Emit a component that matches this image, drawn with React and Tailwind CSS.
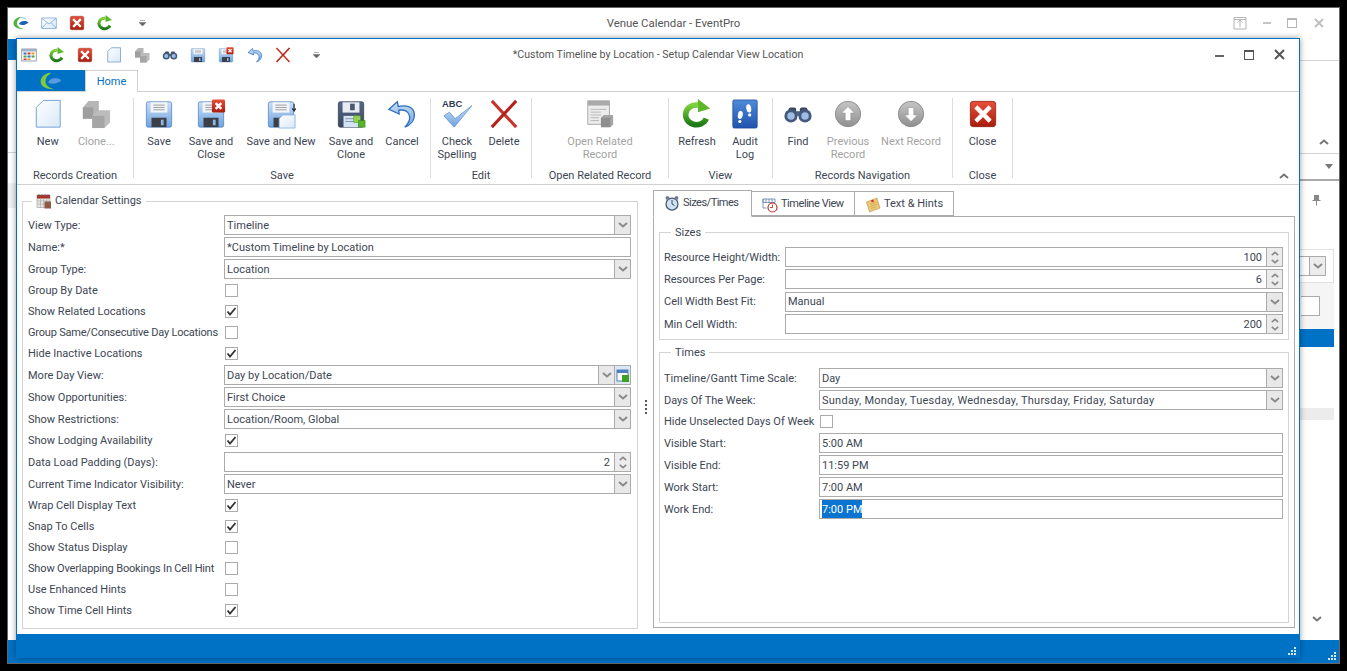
const Defs = () => (
  <svg className="absolute h-0 w-0" aria-hidden="true">
    <defs>
      <linearGradient id="redG" x1="0" y1="0" x2="0" y2="1"><stop offset="0" stopColor="#e8503a" /><stop offset="1" stopColor="#a81c0c" /></linearGradient>
      <linearGradient id="greenG" x1="0" y1="0" x2="0" y2="1"><stop offset="0" stopColor="#7fd13b" /><stop offset="1" stopColor="#1d7a16" /></linearGradient>
      <linearGradient id="blueG" x1="0" y1="0" x2="0" y2="1"><stop offset="0" stopColor="#c9def5" /><stop offset="1" stopColor="#6ea3e0" /></linearGradient>
      <linearGradient id="bookG" x1="0" y1="0" x2="0" y2="1"><stop offset="0" stopColor="#4f8ad8" /><stop offset="1" stopColor="#1f54ac" /></linearGradient>
      <linearGradient id="paperG" x1="0" y1="0" x2="1" y2="1"><stop offset="0" stopColor="#ffffff" /><stop offset="1" stopColor="#d9e8f7" /></linearGradient>
      <linearGradient id="grayG" x1="0" y1="0" x2="0" y2="1"><stop offset="0" stopColor="#c6c6c6" /><stop offset="1" stopColor="#8f8f8f" /></linearGradient>
      <linearGradient id="darkG" x1="0" y1="0" x2="0" y2="1"><stop offset="0" stopColor="#56688a" /><stop offset="1" stopColor="#3a4660" /></linearGradient>
    </defs>
  </svg>
);

const Svg = ({ size = 30, children, vb = "0 0 32 32" }) => (
  <svg width={size} height={size} viewBox={vb} className="shrink-0">{children}</svg>
);

const RedX = ({ size }) => (
  <Svg size={size}>
    <rect x="2.5" y="2.5" width="27" height="27" rx="3" fill="url(#redG)" stroke="#8a1a0e" strokeWidth="0.8" />
    <path d="M10 10 L22 22 M22 10 L10 22" stroke="#fff" strokeWidth="4.6" strokeLinecap="square" />
  </Svg>
);

const NewDoc = ({ size }) => (
  <Svg size={size}>
    <path d="M11 1.5 H29 V30 H3.5 V9 Z" fill="url(#paperG)" stroke="#6f9fd3" strokeWidth={size ? 1.6 : 1} />
  </Svg>
);

const Cubes = ({ size }) => (
  <Svg size={size}>
    <path d="M2 9 L8 2 H19 V14 L13 21 H2 Z" fill="#b5b5b5" />
    <path d="M2 9 H13 V21 H2 Z" fill="#9e9e9e" />
    <path d="M12 18 L18 12 H31 V25 L25 31 H12 Z" fill="#bcbcbc" />
    <path d="M12 18 H25 V31 H12 Z" fill="#a5a5a5" />
  </Svg>
);

const Binoculars = ({ size }) => (
  <Svg size={size}>
    <rect x="6" y="9" width="8" height="6" rx="2" fill="#39475f" />
    <rect x="18" y="9" width="8" height="6" rx="2" fill="#39475f" />
    <rect x="13" y="13" width="6" height="5" fill="#54627c" />
    <circle cx="8.5" cy="18" r="7" fill="#44597c" />
    <circle cx="23.5" cy="18" r="7" fill="#44597c" />
    <circle cx="8.5" cy="18" r="4" fill="#9dbde4" />
    <circle cx="23.5" cy="18" r="4" fill="#9dbde4" />
  </Svg>
);

const Floppy = ({ dark }) => (
  <>
    <rect x="2.5" y="3" width="27" height="27" rx="2" fill={dark ? "url(#darkG)" : "url(#blueG)"} stroke={dark ? "#333d52" : "#4f82bf"} strokeWidth="0.8" />
    <rect x="7" y="3.5" width="18" height="11" fill={dark ? "#e9edf3" : "#f2f4f7"} />
    {dark ? (
      <>
        <rect x="15" y="5" width="5" height="7" fill="#4a5873" />
        <rect x="8" y="18" width="16" height="12" fill="#d3e3f3" />
        <path d="M10 21 H20 M10 24 H20" stroke="#7f93ad" />
      </>
    ) : (
      <>
        <path d="M10 6.5 H22 M10 9 H22 M10 11.5 H22" stroke="#9a9a9a" />
        <rect x="8" y="20" width="16" height="10" fill="#3c3f45" />
        <rect x="18" y="22" width="3" height="6" fill="#8db6e4" />
      </>
    )}
  </>
);

const Save = ({ size }) => <Svg size={size}><Floppy /></Svg>;

const SaveClose = ({ size }) => (
  <Svg size={size}>
    <Floppy />
    <rect x="17" y="0.5" width="14" height="14" rx="1.5" fill="url(#redG)" />
    <path d="M21 4.5 L27 10.5 M27 4.5 L21 10.5" stroke="#fff" strokeWidth="2.6" />
  </Svg>
);

const SaveNew = ({ size }) => (
  <Svg size={size}>
    <Floppy />
    <path d="M18 17 H31 V31 H14 V21 Z" fill="url(#paperG)" stroke="#7fa9d6" strokeWidth="0.8" />
    <path d="M30 5 V13 M28 10 L30 13 L32 10" stroke="#222" strokeWidth="1.1" fill="none" />
  </Svg>
);

const SaveClone = ({ size }) => (
  <Svg size={size}>
    <Floppy dark />
    <rect x="19" y="18" width="7" height="7" fill="#8fd44a" stroke="#4f9a22" strokeWidth="0.6" />
    <rect x="24" y="23" width="7" height="7" fill="#56b52c" stroke="#3a8a1c" strokeWidth="0.6" />
  </Svg>
);

const Undo = ({ size }) => (
  <Svg size={size}>
    <path d="M11 3 L2 11 L13 16 L12.5 12 C18 11 23 13 24 18 C25 23 22 27 19 30 C25 28 30 23 29 15 C28 8 20 6 12 8 Z" fill="url(#blueG)" stroke="#2f6fbb" strokeWidth="1.4" />
  </Svg>
);

const Cross = ({ size }) => (
  <Svg size={size}>
    <path d="M3 2 L29 30" stroke="#c8342b" strokeWidth="3.2" />
    <path d="M29 2 L3 30" stroke="#b3231c" strokeWidth="3.2" />
  </Svg>
);

const Spell = ({ size }) => (
  <Svg size={size}>
    <text x="0" y="9" fontSize="10" fontWeight="700" fontFamily="Liberation Sans, sans-serif" fill="#2f3b52">ABC</text>
    <path d="M2 18 L13 30 L32 7 L14 21 L8 14 Z" fill="url(#blueG)" stroke="#5f8fc7" strokeWidth="0.8" />
  </Svg>
);

const Related = ({ size }) => (
  <Svg size={size}>
    <rect x="3" y="2" width="23" height="25" fill="#ececec" stroke="#a6a6a6" />
    <rect x="3" y="2" width="23" height="5" fill="#a9a9a9" />
    <path d="M6 11 H23 M6 14 H17 M6 17 H17 M6 20 H15 M6 23 H15" stroke="#b5b5b5" />
    <path d="M17 20 L20 17 H30 V27 L27 30 H17 Z" fill="#a5a5a5" />
    <path d="M17 20 H27 V30 H17 Z" fill="#8e8e8e" />
  </Svg>
);

const Refresh = ({ size }) => (
  <Svg size={size}>
    <path d="M26 21 A11.5 10.5 0 1 1 17 6.5" fill="none" stroke="url(#greenG)" strokeWidth="6" />
    <path d="M17 0 L17 14 L30 10 Z" fill="#5cb82a" />
  </Svg>
);

const Audit = ({ size }) => (
  <Svg size={size}>
    <rect x="3" y="1" width="26" height="30" rx="1.5" fill="url(#bookG)" stroke="#1c4a96" strokeWidth="0.8" />
    <ellipse cx="11" cy="17" rx="2.6" ry="4.4" fill="#fff" transform="rotate(10 11 17)" />
    <circle cx="10.5" cy="24" r="1.7" fill="#fff" />
    <ellipse cx="20" cy="10" rx="2.6" ry="4.4" fill="#fff" transform="rotate(-10 20 10)" />
    <circle cx="21" cy="17" r="1.7" fill="#fff" />
  </Svg>
);

const ArrowCircle = ({ size, down }) => (
  <Svg size={size}>
    <circle cx="16" cy="16" r="13.5" fill="url(#grayG)" stroke="#8a8a8a" />
    <g transform={down ? "rotate(180 16 16)" : undefined}>
      <path d="M16 8 L23 15 H19 V23 H13 V15 H9 Z" fill="#fff" stroke="#8c8c8c" strokeWidth="0.6" />
    </g>
  </Svg>
);

const Logo = ({ size = 16, band }) => (
  <Svg size={size}>
    <path d="M14 4 C5 6 1 11 1 17 C1 24 9 28 21 28 C13 26 8 22 8 17 C8 12 10 8 16 5 Z" fill={band ? "#7ecb3a" : "#4fb33c"} />
    {!band && <path d="M14 5 C20 3 26 6 28 10 C24 7 19 6 14 5 Z" fill="#7fb6e6" />}
    <path d="M12 18 C14 12 24 10 31 15 C26 20 18 22 12 18 Z" fill={band ? "#5a9ae0" : "#1c5fb0"} />
  </Svg>
);

const Mail = ({ size }) => (
  <Svg size={size}>
    <rect x="1.5" y="6" width="29" height="21" fill="url(#paperG)" stroke="#6d9fd3" strokeWidth="1.4" />
    <path d="M2 7 L16 18 L30 7 M2 26 L12 15 M30 26 L20 15" fill="none" stroke="#6d9fd3" strokeWidth="1.4" />
  </Svg>
);

const GridIcon = ({ size }) => (
  <Svg size={size}>
    <rect x="1.5" y="4" width="29" height="24" fill="#fff" stroke="#6c7a8c" strokeWidth="1.4" />
    <rect x="1.5" y="4" width="29" height="5" fill="#9fb1c6" />
    <rect x="5" y="11" width="6" height="4" fill="#3c6fbe" />
    <rect x="13" y="11" width="6" height="4" fill="#c8402e" />
    <rect x="21" y="11" width="6" height="4" fill="#e39b2c" />
    <rect x="5" y="17" width="6" height="4" fill="#4aa53a" />
    <rect x="13" y="17" width="6" height="4" fill="#3c6fbe" />
    <rect x="21" y="17" width="6" height="4" fill="#4aa53a" />
    <rect x="5" y="23" width="6" height="3" fill="#c8402e" />
    <rect x="13" y="23" width="6" height="3" fill="#e39b2c" />
  </Svg>
);

const CalendarIcon = () => (
  <Svg size={16}>
    <rect x="2" y="4" width="26" height="25" fill="#e8e4df" stroke="#8a8a8a" />
    <rect x="2" y="4" width="26" height="7" fill="#a8322a" />
    <path d="M6 2 V7 M12 2 V7 M18 2 V7 M24 2 V7" stroke="#666" strokeWidth="1.6" />
    <path d="M2 16 H28 M2 22 H28 M9 11 V29 M15 11 V29 M21 11 V29" stroke="#9c9c9c" />
    <rect x="17" y="17" width="13" height="14" fill="#8d5a48" />
  </Svg>
);

const ClockIcon = () => (
  <Svg size={16}>
    <circle cx="16" cy="18" r="12" fill="#cfe3f5" stroke="#45556a" strokeWidth="2.5" />
    <circle cx="7" cy="6" r="4" fill="#6f7f94" />
    <circle cx="25" cy="6" r="4" fill="#6f7f94" />
    <path d="M16 10 V18 L21 21" stroke="#2d3a4c" strokeWidth="1.8" fill="none" />
  </Svg>
);

const TimelineIcon = () => (
  <Svg size={16}>
    <path d="M2 4 H26 V11 H2 Z M8 4 V11 M14 4 V11 M20 4 V11 M2 4 V22 H9" fill="none" stroke="#5a7fb0" strokeWidth="1.6" />
    <circle cx="21" cy="21" r="9" fill="#fff" stroke="#b83228" strokeWidth="2.4" />
    <path d="M21 15 V21 H16" stroke="#b83228" strokeWidth="1.8" fill="none" />
  </Svg>
);

const NoteIcon = () => (
  <Svg size={16}>
    <path d="M3 10 L24 2 L30 22 L9 30 Z" fill="#ecc873" stroke="#a8833a" />
    <path d="M10 15 L23 10 M11 19 L25 14 M12 23 L22 19" stroke="#b8924a" />
    <circle cx="15" cy="8" r="2.6" fill="#c8342b" />
  </Svg>
);

const Chevron = ({ up, small, color = "#8a8a8a" }) => (
  <svg width={small ? 8 : 10} height={small ? 5 : 6} viewBox="0 0 10 6" className="shrink-0">
    <path d={up ? "M1 5 L5 1.5 L9 5" : "M1 1 L5 4.5 L9 1"} fill="none" stroke={color} strokeWidth="2" />
  </svg>
);

const QuickDrop = () => (
  <svg width="7" height="6" viewBox="0 0 7 6" className="shrink-0">
    <path d="M1 .5H6M0 2.5H7L3.5 6Z" fill="#666" stroke="#666" strokeWidth="0.5" />
  </svg>
);

const Grip = () => (
  <svg width="9" height="9" viewBox="0 0 9 9" className="shrink-0">
    <path d="M6 0h2v2H6zM3 3h2v2H3zM6 3h2v2H6zM0 6h2v2H0zM3 6h2v2H3zM6 6h2v2H6z" fill="#d5e6f6" />
  </svg>
);

const RibbonBtn = ({ w, icon, label, off }) => (
  <div className={`flex flex-col items-center ${w}`}>
    <div className="mt-[1px] flex h-[30px] items-center justify-center">{icon}</div>
    <div className={`mt-[6px] whitespace-pre-line text-center leading-[13px] ${off ? "text-[#a3a3a3]" : "text-[#3d4653]"}`}>{label}</div>
  </div>
);

const RibbonGroup = ({ w, label, children }) => (
  <div className={`mt-[6px] flex h-[80px] flex-col border-r border-[#dcdcdc] ${w}`}>
    <div className="flex h-[71px] shrink-0 justify-center">{children}</div>
    <div className="shrink-0 text-center leading-[14px] text-[#3d4653]">{label}</div>
  </div>
);

const Drop = ({ value, extra, className }) => (
  <div className="flex h-[20px] flex-1 items-center border border-[#ababab] bg-white">
    <span className={`flex-1 truncate pl-[2px] pt-[2px] ${className}`}>{value}</span>
    <span className="flex h-full w-[16px] items-center justify-center border-l border-[#ababab] bg-[#e8e8e8]"><Chevron /></span>
    {extra}
  </div>
);

const TextIn = ({ value, selected }) => (
  <div className="flex h-[20px] flex-1 items-center border border-[#ababab] bg-white pl-[2px]">
    {selected ? <span className="bg-[#0a74d0] pt-[2px] text-white">{value}</span> : <span className="pt-[2px]">{value}</span>}
  </div>
);

const Spin = ({ value }) => (
  <div className="flex h-[20px] flex-1 items-center border border-[#ababab] bg-white">
    <span className="flex-1 pr-[4px] pt-[2px] text-right">{value}</span>
    <span className="flex h-full w-[16px] flex-col items-center justify-center gap-[3px] border-l border-[#ababab] bg-[#ececec]">
      <Chevron up small />
      <Chevron small />
    </span>
  </div>
);

const Check = ({ on }) => (
  <span className="flex h-[13px] w-[13px] items-center justify-center border border-[#ababab] bg-white">
    {on && (
      <svg width="11" height="11" viewBox="0 0 11 11">
        <path d="M1.5 5.5 L4 8.5 L9.5 2" fill="none" stroke="#333" strokeWidth="1.8" />
      </svg>
    )}
  </span>
);

const Row = ({ label, h = "h-[22px]", w = "w-[196px]", tight, children }) => (
  <div className={`flex items-center ${h}`}>
    <span className={`shrink-0 whitespace-nowrap pt-[2px] ${w} ${tight}`}>{label}</span>
    {children}
  </div>
);

const CheckRow = ({ label, on, w, tight }) => (
  <Row label={label} h="h-[21px]" w={w} tight={tight}>
    <span className="pl-[1px]"><Check on={on} /></span>
  </Row>
);

const Tab = ({ icon, label, w, active, tight }) => (
  <div className={`flex items-center gap-[3px] whitespace-nowrap border border-[#ababab] bg-white pl-[10px] ${w} ${active ? "relative z-10 -mb-px h-[27px] border-b-white pb-[1px]" : "-ml-px h-[25px] pt-[2px]"}`}>
    {icon}
    <span className={tight}>{label}</span>
  </div>
);

const GroupBox = ({ legend, icon, className, inset, children }) => (
  <fieldset className={`border border-[#d4d4d4] ${className}`}>
    <legend className={`flex h-[16px] items-center gap-[3px] px-[4px] ${inset}`}>
      {icon}
      {legend}
    </legend>
    {children}
  </fieldset>
);

export default function App() {
  return (
    <div className="relative h-[671px] w-[1347px] overflow-hidden bg-black text-[11px] text-[#3d4653] [font-family:Roboto,sans-serif]">
      <Defs />
      {/* main window behind the dialog */}
      <div className="absolute left-[7px] top-[7px] flex h-[657px] w-[1333px] flex-col border border-[#666] bg-white">
        <div className="grid h-[30px] shrink-0 grid-cols-[1fr_auto_1fr] items-center">
          <div className="flex items-center gap-[12px] pl-[5px]">
            <Logo size={16} />
            <Mail size={16} />
            <RedX size={16} />
            <Refresh size={16} />
            <span className="pl-[14px]"><QuickDrop /></span>
          </div>
          <div className="pt-[1px] text-[11.4px] text-[#555]">Venue Calendar - EventPro</div>
          <div className="flex items-center justify-end gap-[16px] pr-[14px]">
            <svg width="14" height="14" viewBox="0 0 14 14"><path d="M1 1.5H13V13H1ZM7 11V4M4.5 6.5L7 4L9.5 6.5M1 3.5H13" fill="none" stroke="#b5b5b5" /></svg>
            <span className="h-[2px] w-[8px] bg-[#c4c4c4]" />
            <span className="h-[10px] w-[10px] border border-t-[2px] border-[#b5b5b5]" />
            <svg width="12" height="12" viewBox="0 0 12 12"><path d="M2 2L10 10M10 2L2 10" stroke="#c0c0c0" strokeWidth="2" /></svg>
          </div>
        </div>
        <div className="flex flex-1 justify-between">
          <div className="w-[8px]">
            <div className="mt-[1px] h-[21px] bg-[#0072c6]" />
            <div className="h-[93px] border-b border-[#d4d4d4]" />
            <div className="mt-[30px] h-[25px] bg-[#f0f0f0]" />
          </div>
          <div className="w-[39px] text-[#777]">
            <div className="h-[23px] border-b border-[#d4d4d4]" />
            <div className="flex h-[93px] items-end justify-end border-b border-[#d4d4d4] pb-[8px] pr-[10px]"><Chevron up color="#777" /></div>
            <div className="flex h-[27px] items-center justify-end border-b-2 border-[#aaa] pr-[6px]">
              <svg width="8" height="5" viewBox="0 0 8 5"><path d="M0 0H8L4 5Z" fill="#777" /></svg>
            </div>
            <div className="flex h-[68px] justify-end pr-[18px] pt-[13px]">
              <svg width="9" height="12" viewBox="0 0 9 12"><path d="M2 1H7V6H8.5V7H5V11.5H4V7H.5V6H2Z" fill="#888" /></svg>
            </div>
            <div className="mr-[5px] flex h-[34px] items-center justify-end border border-l-0 border-[#e2e2e2] pr-[7px]">
              <span className="flex h-[20px] w-[26px] items-center justify-end border border-l-0 border-[#ababab] bg-white"><span className="flex h-full w-[16px] items-center justify-center border-l border-[#ababab] bg-[#ececec]"><Chevron /></span></span>
            </div>
            <div className="mr-[5px] flex h-[46px] items-start justify-end bg-[#f5f5f5] pr-[14px] pt-[13px]">
              <span className="h-[20px] w-[19px] border border-l-0 border-[#ababab] bg-white" />
            </div>
            <div className="mr-[5px] h-[18px] bg-[#0072c6]" />
            <div className="mr-[5px] mt-[61px] h-[12px] bg-[#ececec]" />
            <div className="mt-[196px] flex justify-end pr-[17px]"><Chevron color="#777" /></div>
          </div>
        </div>
        <div className="flex h-[23px] shrink-0 items-end justify-end bg-[#0072c6] p-[2px]"><Grip /></div>
      </div>

      {/* setup dialog */}
      <div className="absolute left-[16px] top-[38px] flex h-[620px] w-[1284px] flex-col border-x border-t border-[#0072c6] bg-white shadow-[0_0_6px_rgba(0,0,0,0.4)]">
        <div className="grid h-[31px] shrink-0 grid-cols-[1fr_auto_1fr] items-center">
          <div className="flex items-center gap-[12.2px] pl-[4px]">
            <GridIcon size={16} />
            <Refresh size={16} />
            <RedX size={16} />
            <NewDoc size={16} />
            <Cubes size={16} />
            <Binoculars size={16} />
            <Save size={16} />
            <SaveClose size={16} />
            <Undo size={16} />
            <Cross size={16} />
            <span className="pl-[10px]"><QuickDrop /></span>
          </div>
          <div className="pt-[1px] text-[10.6px] text-[#555]">*Custom Timeline by Location - Setup Calendar View Location</div>
          <div className="flex items-center justify-end gap-[20px] pr-[14px]">
            <span className="mt-[3px] h-[2px] w-[9px] bg-[#666]" />
            <span className="h-[10px] w-[10px] border border-t-[2px] border-[#555]" />
            <svg width="11" height="11" viewBox="0 0 11 11"><path d="M1 1L10 10M10 1L1 10" stroke="#555" strokeWidth="2" /></svg>
          </div>
        </div>

        <div className="flex h-[22px] shrink-0 border-b border-[#d0d0d0]">
          <div className="flex w-[68px] items-center justify-center bg-[#0072c6]"><Logo size={22} band /></div>
          <div className="-mb-px flex w-[53px] items-center justify-center border-x border-t border-[#d0d0d0] border-b-white bg-white pt-[1px] text-[#0072c6]">Home</div>
        </div>

        <div className="flex h-[93px] shrink-0 border-b border-[#d0d0d0]">
          <RibbonGroup w="w-[117px]" label="Records Creation">
            <div className="w-[14px]" />
            <RibbonBtn w="w-[34px]" icon={<NewDoc />} label="New" />
            <RibbonBtn w="w-[64px]" icon={<Cubes />} label="Clone..." off />
            <div className="w-[5px]" />
          </RibbonGroup>
          <RibbonGroup w="w-[297px]" label="Save">
            <RibbonBtn w="w-[50px]" icon={<Save />} label="Save" />
            <RibbonBtn w="w-[54px]" icon={<SaveClose />} label={"Save and\nClose"} />
            <RibbonBtn w="w-[86px]" icon={<SaveNew />} label="Save and New" />
            <RibbonBtn w="w-[54px]" icon={<SaveClone />} label={"Save and\nClone"} />
            <RibbonBtn w="w-[48px]" icon={<Undo />} label="Cancel" />
            <div className="w-[4px]" />
          </RibbonGroup>
          <RibbonGroup w="w-[101px]" label="Edit">
            <RibbonBtn w="w-[52px]" icon={<Spell />} label={"Check\nSpelling"} />
            <RibbonBtn w="w-[42px]" icon={<Cross />} label="Delete" />
            <div className="w-[6px]" />
          </RibbonGroup>
          <RibbonGroup w="w-[137px]" label="Open Related Record">
            <RibbonBtn w="w-[136px]" icon={<Related />} label={"Open Related\nRecord"} off />
          </RibbonGroup>
          <RibbonGroup w="w-[104px]" label="View">
            <RibbonBtn w="w-[56px]" icon={<Refresh />} label="Refresh" />
            <RibbonBtn w="w-[40px]" icon={<Audit />} label={"Audit\nLog"} />
            <div className="w-[7px]" />
          </RibbonGroup>
          <RibbonGroup w="w-[180px]" label="Records Navigation">
            <RibbonBtn w="w-[50px]" icon={<Binoculars />} label="Find" />
            <RibbonBtn w="w-[50px]" icon={<ArrowCircle />} label={"Previous\nRecord"} off />
            <RibbonBtn w="w-[76px]" icon={<ArrowCircle down />} label="Next Record" off />
            <div className="w-[3px]" />
          </RibbonGroup>
          <RibbonGroup w="w-[60px]" label="Close">
            <RibbonBtn w="w-[59px]" icon={<RedX />} label="Close" />
          </RibbonGroup>
          <div className="flex flex-1 items-end justify-end pb-[5px] pr-[10px]"><Chevron up color="#777" /></div>
        </div>

        <div className="flex flex-1">
          {/* left form */}
          <div className="ml-[5px] w-[616px] pt-[8px]">
            <GroupBox legend="Calendar Settings" icon={<CalendarIcon />} inset="ml-[4px]" className="h-[436px] pl-[5px] pr-[6px] pt-[5px]">
              <Row label="View Type:"><Drop value="Timeline" /></Row>
              <Row label="Name:*"><TextIn value="*Custom Timeline by Location" /></Row>
              <Row label="Group Type:"><Drop value="Location" /></Row>
              <CheckRow label="Group By Date" />
              <CheckRow label="Show Related Locations" on />
              <CheckRow label="Group Same/Consecutive Day Locations" tight="tracking-[-0.2px]" />
              <CheckRow label="Hide Inactive Locations" on />
              <Row label="More Day View:">
                <Drop
                  value="Day by Location/Date"
                  extra={
                    <span className="flex h-full w-[16px] items-center justify-center border-l border-[#ababab] bg-[#dbe7f4]">
                      <svg width="13" height="13" viewBox="0 0 13 13"><rect x="1" y="1" width="11" height="11" fill="#fff" stroke="#4f80bd" /><rect x="1" y="1" width="11" height="3" fill="#4f80bd" /><rect x="6" y="6" width="7" height="7" fill="#3f9f22" /></svg>
                    </span>
                  }
                />
              </Row>
              <Row label="Show Opportunities:"><Drop value="First Choice" /></Row>
              <Row label="Show Restrictions:"><Drop value="Location/Room, Global" /></Row>
              <CheckRow label="Show Lodging Availability" on />
              <Row label="Data Load Padding (Days):"><Spin value="2" /></Row>
              <Row label="Current Time Indicator Visibility:"><Drop value="Never" /></Row>
              <CheckRow label="Wrap Cell Display Text" on />
              <CheckRow label="Snap To Cells" on />
              <CheckRow label="Show Status Display" />
              <CheckRow label="Show Overlapping Bookings In Cell Hint" tight="tracking-[-0.16px]" />
              <CheckRow label="Use Enhanced Hints" />
              <CheckRow label="Show Time Cell Hints" on />
            </GroupBox>
          </div>

          {/* splitter */}
          <div className="flex w-[15px] flex-col items-center justify-center gap-[2px] pb-[6px]">
            <span className="h-[2px] w-[2px] bg-[#555]" />
            <span className="h-[2px] w-[2px] bg-[#555]" />
            <span className="h-[2px] w-[2px] bg-[#555]" />
            <span className="h-[2px] w-[2px] bg-[#555]" />
          </div>

          {/* right tabs */}
          <div className="w-[642px] pt-[5px]">
            <div className="flex items-end">
              <Tab active w="w-[99px]" icon={<ClockIcon />} label="Sizes/Times" tight="tracking-[-0.5px]" />
              <Tab w="w-[104px]" icon={<TimelineIcon />} label="Timeline View" tight="tracking-[-0.45px]" />
              <Tab w="w-[100px]" icon={<NoteIcon />} label="Text & Hints" />
            </div>
            <div className="flex h-[412px] flex-col gap-[4px] border border-[#ababab] px-[5px] pt-[7px]">
              <GroupBox legend="Sizes" inset="ml-[7px] pt-[2px]" className="h-[116px] pl-[4px] pr-[5px] pt-[6px]">
                <Row label="Resource Height/Width:" w="w-[121px]"><Spin value="100" /></Row>
                <Row label="Resources Per Page:" w="w-[121px]"><Spin value="6" /></Row>
                <Row label="Cell Width Best Fit:" w="w-[121px]" h="h-[23px]"><Drop value="Manual" /></Row>
                <Row label="Min Cell Width:" w="w-[121px]"><Spin value="200" /></Row>
              </GroupBox>
              <GroupBox legend="Times" inset="ml-[7px] pt-[2px]" className="h-[279px] pl-[4px] pr-[5px] pt-[7px]">
                <Row label="Timeline/Gantt Time Scale:" w="w-[155px]"><Drop value="Day" /></Row>
                <Row label="Days Of The Week:" w="w-[155px]"><Drop value="Sunday, Monday, Tuesday, Wednesday, Thursday, Friday, Saturday" className="tracking-[0.26px]" /></Row>
                <CheckRow label="Hide Unselected Days Of Week" w="w-[155px]" />
                <Row label="Visible Start:" w="w-[155px]"><TextIn value="5:00 AM" /></Row>
                <Row label="Visible End:" w="w-[155px]"><TextIn value="11:59 PM" /></Row>
                <Row label="Work Start:" w="w-[155px]"><TextIn value="7:00 AM" /></Row>
                <Row label="Work End:" w="w-[155px]"><TextIn value="7:00 PM" selected /></Row>
              </GroupBox>
            </div>
          </div>
        </div>

        <div className="flex h-[24px] shrink-0 items-end justify-end bg-[#0072c6] p-[2px]"><Grip /></div>
      </div>
    </div>
  );
}
